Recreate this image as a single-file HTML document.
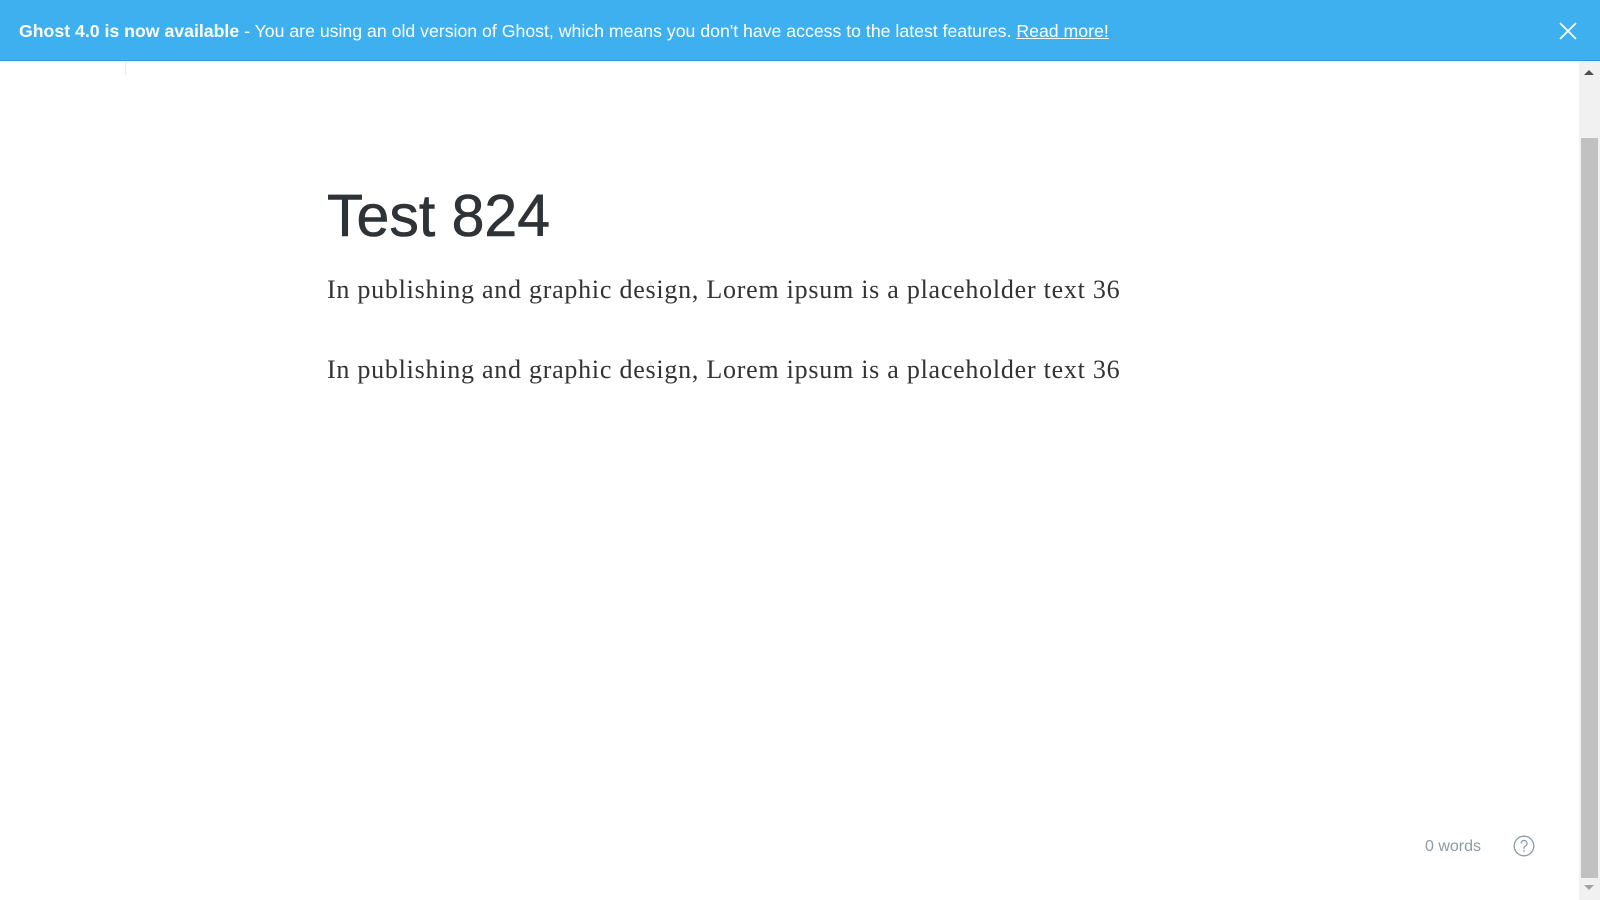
<!DOCTYPE html>
<html><head><meta charset="utf-8"><style>
html,body{margin:0;padding:0;width:1600px;height:900px;overflow:hidden;background:#fff;font-family:"Liberation Sans",sans-serif;}
.banner{position:absolute;left:0;top:0;width:1600px;height:61px;background:#3eb0ef;border-bottom:1px solid #2a9ee0;box-sizing:border-box;color:#fff;font-size:17.7px;}
.banner .t{position:absolute;left:19px;top:21px;white-space:nowrap;}
.banner a{color:#fff;text-decoration:underline;}
.x{position:absolute;left:1559px;top:22px;}
.sb{position:absolute;left:1579px;top:61px;width:21px;height:839px;background:#f1f1f1;}
.thumb{position:absolute;left:1581px;top:138px;width:17px;height:740px;background:#c1c1c1;}
.vline{position:absolute;left:125px;top:61px;width:1px;height:14px;background:#e3e9ed;}
h1{position:absolute;left:327px;top:181px;margin:0;font-size:59px;font-weight:normal;color:#2e3338;line-height:70px;white-space:nowrap;-webkit-text-stroke:0.6px #2e3338;}
p{position:absolute;left:327px;margin:0;font-family:"Liberation Serif",serif;font-size:26px;letter-spacing:0.75px;color:#333;white-space:nowrap;line-height:30px;}
.wc{position:absolute;left:1425px;top:838px;font-size:16px;color:#8a9ba5;}
</style></head><body>
<div class="banner"><div class="t"><b>Ghost 4.0 is now available</b> - You are using an old version of Ghost, which means you don't have access to the latest features. <a>Read more!</a></div>
<svg class="x" width="18" height="18" viewBox="0 0 18 18"><path d="M1 1L17 17M17 1L1 17" stroke="#fff" stroke-width="1.6"/></svg></div>
<div class="vline"></div>
<div class="sb"></div><div class="thumb"></div>
<svg style="position:absolute;left:1583px;top:68px" width="12" height="8"><path d="M1 7L6 2L11 7Z" fill="#505050"/></svg>
<svg style="position:absolute;left:1583px;top:884px" width="12" height="8"><path d="M1 1L6 6L11 1Z" fill="#a3a3a3"/></svg>
<h1>Test 824</h1>
<p style="top:275px">In publishing and graphic design, Lorem ipsum is a placeholder text 36</p>
<p style="top:355px">In publishing and graphic design, Lorem ipsum is a placeholder text 36</p>
<div class="wc">0 words</div>
<svg style="position:absolute;left:1513px;top:835px" width="22" height="22" viewBox="0 0 22 22"><circle cx="11" cy="11" r="9.8" fill="none" stroke="#8a9ba5" stroke-width="1.3"/><path d="M8 8.5a3 3 0 1 1 4.2 2.7c-.8.4-1.2 1-1.2 1.8v.8" fill="none" stroke="#8a9ba5" stroke-width="1.3"/><circle cx="11" cy="16" r=".9" fill="#8a9ba5"/></svg>
</body></html>
